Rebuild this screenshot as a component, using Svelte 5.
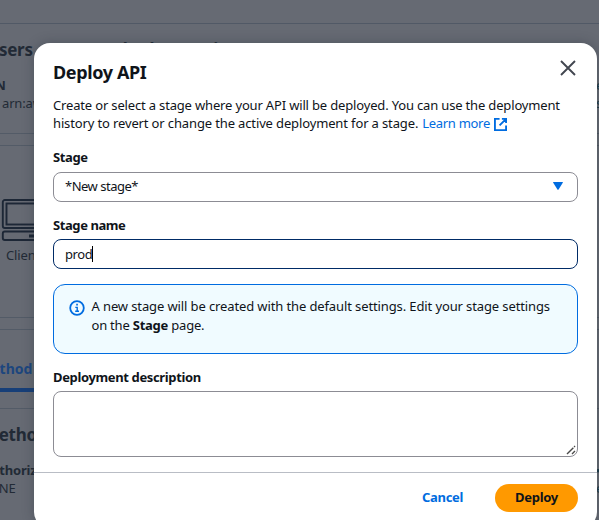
<script>
  let stageName = $state('prod');
</script>

<div class="screen">
  <div class="page">
    <div class="topbar"></div>
    <section class="overview">
      <h2>/users - GET - Method execution</h2>
      <div class="cols">
        <div class="meta"><b>ARN</b><span class="arn">arn:aws:execute-api</span></div>
        <div class="edge"><span>e</span><span>s</span></div>
      </div>
    </section>
    <section class="flow">
      <svg width="60" height="44" viewBox="0 0 60 44" fill="none" stroke="#1d2736" stroke-width="1.9">
        <rect x="2.8" y="1" width="52" height="28" rx="2" />
        <rect x="6.5" y="4.5" width="45" height="21" />
        <rect x="2.8" y="32.5" width="52" height="8.5" rx="2" />
        <path d="M29 37h8" stroke-width="3" />
      </svg>
      <span>Client</span>
    </section>
    <section class="tabs"><b>Method request</b><i></i></section>
    <section class="settings">
      <h2>Method request settings</h2>
      <div class="cols">
        <div class="meta"><b>Authorization</b><span>NONE</span></div>
        <div class="edge"><span>▪</span><span>e</span></div>
      </div>
    </section>
  </div>

  <div class="overlay">
    <div class="modal">
      <header>
        <h1>Deploy API</h1>
        <svg class="close" width="16" height="16" viewBox="0 0 16 16" fill="none" stroke="#424650" stroke-width="1.9">
          <path d="M1 1l14 14M15 1L1 15" />
        </svg>
      </header>
      <main>
        <div class="intro">
          <div class="l1">Create or select a stage where your API will be deployed. You can use the deployment</div>
          <div class="second"><span class="l2">history to revert or change the active deployment for a stage.</span><span class="link">Learn more</span><svg width="13" height="13" viewBox="0 0 14 14" fill="none" stroke="#006ce0" stroke-width="2"><path d="M6 1H1v12h12V8M8.5 1H13v4.5M13 1L6 8" /></svg></div>
        </div>
        <div class="label stage">Stage</div>
        <div class="field select"><span>*New stage*</span><svg width="10" height="8" viewBox="0 0 10 8"><path d="M.5 0h9q.7 0 .4.6L5.6 7.4q-.6.8-1.2 0L.1.6Q-.2 0 .5 0z" fill="#006ce0" /></svg></div>
        <div class="label name">Stage name</div>
        <div class="field input"><span>{stageName}</span><i class="caret"></i></div>
        <div class="alert">
          <svg width="16" height="16" viewBox="0 0 16 16" fill="none" stroke="#006ce0"><circle cx="8" cy="8" r="6.8" stroke-width="1.8" /><path d="M6.3 7.4H8.2V11M6.2 11.2h3.8" stroke-width="1.4" /><path d="M7.2 4.7h1.7" stroke-width="1.7" /></svg>
          <div><div class="a1">A new stage will be created with the default settings. Edit your stage settings</div><div class="a2">on the <b>Stage</b> page.</div></div>
        </div>
        <div class="label desc">Deployment description</div>
        <div class="area"><svg width="10" height="10" viewBox="0 0 10 10" fill="none" stroke="#4a4a4a" stroke-width="1.4"><path d="M1 9L9 1M6 9l3-3" stroke-dasharray="9 1" /></svg></div>
      </main>
      <footer>
        <span class="cancel">Cancel</span>
        <span class="deploy">Deploy</span>
      </footer>
    </div>
  </div>
</div>

<style>
  :global(body) { margin: 0; }
  * { box-sizing: border-box; }
  .screen { position: relative; width: 599px; height: 520px; overflow: hidden; font: 13px/18px "Noto Sans", "Open Sans", sans-serif; color: #0f141a; white-space: nowrap; }
  svg { display: block; flex: none; }
  h1, h2 { margin: 0; }
  .page { height: 520px; background: #666a73; color: #222a36; overflow: hidden; }
  .topbar { height: 24px; border-bottom: 1px solid #515966; }
  .overview { height: 110px; padding-top: 15px; border-bottom: 1px solid #535b67; }
  h2 { font-size: 17px; line-height: 22px; letter-spacing: -.3px; margin-left: -18.5px; }
  .cols { display: flex; justify-content: space-between; }
  .meta { display: flex; flex-direction: column; letter-spacing: -.15px; }
  .overview .cols { margin-top: 15px; }
  .overview .meta b { margin-left: -22px; }
  .arn { margin-left: 2px; }
  .edge { width: 3px; overflow: hidden; display: flex; flex-direction: column; color: #183b49; }
  .flow { height: 173px; margin-top: 11px; border-top: 1px solid #535b67; border-bottom: 1px solid #535b67; padding-top: 53px; }
  .flow span { display: block; margin: 3px 0 0 6px; letter-spacing: -.1px; }
  .tabs { height: 64px; margin-top: 11px; border-top: 1px solid #535b67; padding-top: 30px; }
  .tabs b { display: block; font-size: 14px; color: #1d467e; margin-left: -22px; height: 28px; }
  .tabs i { display: block; width: 95px; height: 4px; background: #173f78; }
  .settings { margin-top: 15px; border-top: 1px solid #535b67; padding-top: 15px; }
  .settings h2 { margin-left: -17px; }
  .settings .cols { margin-top: 15px; }
  .settings b { margin-left: -18px; }
  .settings .meta span { margin-left: -21px; }
  .overlay { position: absolute; inset: 0; padding: 43px 0 0 34px; }
  .modal { width: 563px; height: 485px; border-radius: 16px; background: #fff; box-shadow: 0 0 12px rgba(35, 43, 55, .35); }
  header { height: 52px; display: flex; justify-content: space-between; align-items: flex-start; padding: 18px 21.5px 0 19px; }
  h1 { font-size: 18px; line-height: 22px; letter-spacing: -.37px; }
  .close { margin-top: -1px; }
  main { height: 378px; padding: 1px 19px 0; border-bottom: 1px solid #b9bdc5; }
  .l1 { letter-spacing: -.165px; }
  .second { display: flex; align-items: center; }
  .second svg { margin-top: 2px; }
  .l2 { letter-spacing: -.135px; }
  .link { color: #006ce0; margin: 0 4px 0 4px; letter-spacing: -.3px; }
  .label { font-weight: 700; line-height: 18px; letter-spacing: -.36px; }
  .stage { margin-top: 16px; }
  .field { height: 30px; border: 1px solid #8c8c94; border-radius: 8px; padding: 0 14px 0 11px; display: flex; align-items: center; }
  .select { margin-top: 6px; justify-content: space-between; padding-bottom: 3px; }
  .select span { letter-spacing: -.5px; }
  .name { margin-top: 14px; letter-spacing: -.42px; }
  .input { margin-top: 5px; border-color: #002b66; }
  .input span { letter-spacing: -.4px; }
  .caret { width: 1px; height: 16px; background: #000; }
  .alert { height: 70px; margin-top: 15px; border: 1px solid #006ce0; border-radius: 12px; background: #f0fbff; padding: 12px 14.5px; display: flex; gap: 7px; line-height: 19px; }
  .alert > svg { margin-top: 3px; }
  .a1 { letter-spacing: -.115px; }
  .a2 { letter-spacing: -.22px; }
  .desc { margin-top: 14px; }
  .area { height: 66px; margin-top: 5px; border: 1px solid #8c8c94; border-radius: 8px; display: flex; justify-content: flex-end; align-items: flex-end; padding: 1px; }
  footer { padding: 11px 19px 0; display: flex; justify-content: flex-end; font-weight: 700; line-height: 27px; letter-spacing: -.3px; }
  .cancel { color: #006ce0; width: 73px; }
  .deploy { width: 83px; height: 28px; text-align: center; background: #ff9900; border-radius: 14px; }
</style>
